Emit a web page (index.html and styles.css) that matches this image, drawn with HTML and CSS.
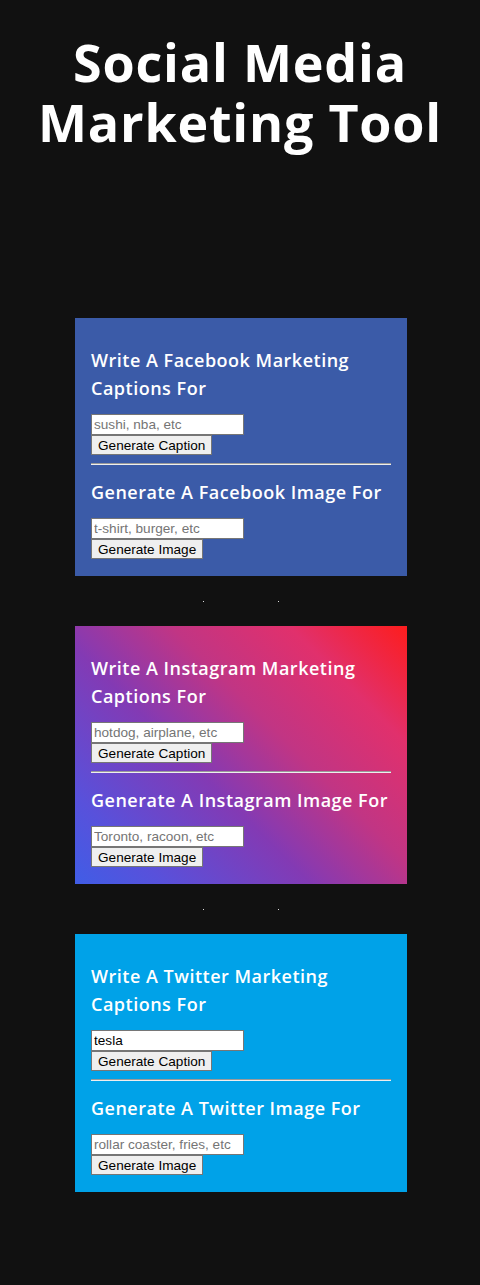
FILE: index.html
```html
<!DOCTYPE html>
<html>
<head>
<meta charset="utf-8">
<link rel="stylesheet" href="styles.css">
</head>
<body>
<h1 class="title">Social Media Marketing Tool</h1>
<main class="cards">
  <section class="card card-facebook">
    <h3 class="card-heading">Write A Facebook Marketing Captions For</h3>
    <div class="field">
      <input class="text-input" type="text" placeholder="sushi, nba, etc">
      <button class="btn">Generate Caption</button>
    </div>
    <hr class="divider">
    <h3 class="card-heading">Generate A Facebook Image For</h3>
    <div class="field">
      <input class="text-input" type="text" placeholder="t-shirt, burger, etc">
      <button class="btn">Generate Image</button>
    </div>
  </section>
  <div class="dots"><span class="dot"></span><span class="dot"></span></div>
  <section class="card card-instagram">
    <h3 class="card-heading">Write A Instagram Marketing Captions For</h3>
    <div class="field">
      <input class="text-input" type="text" placeholder="hotdog, airplane, etc">
      <button class="btn">Generate Caption</button>
    </div>
    <hr class="divider">
    <h3 class="card-heading">Generate A Instagram Image For</h3>
    <div class="field">
      <input class="text-input" type="text" placeholder="Toronto, racoon, etc">
      <button class="btn">Generate Image</button>
    </div>
  </section>
  <div class="dots"><span class="dot"></span><span class="dot"></span></div>
  <section class="card card-twitter">
    <h3 class="card-heading">Write A Twitter Marketing Captions For</h3>
    <div class="field">
      <input class="text-input" type="text" value="tesla">
      <button class="btn">Generate Caption</button>
    </div>
    <hr class="divider">
    <h3 class="card-heading">Generate A Twitter Image For</h3>
    <div class="field">
      <input class="text-input" type="text" placeholder="rollar coaster, fries, etc">
      <button class="btn">Generate Image</button>
    </div>
  </section>
</main>
</body>
</html>
```

FILE: styles.css
```css
html, body {
  margin: 0;
  padding: 0;
  background: #111111;
}
body {
  font-family: "Open Sans", "Liberation Sans", sans-serif;
  color: #ffffff;
  min-height: 1285px;
}
.title {
  margin: 0;
  padding-top: 32px;
  font-size: 52px;
  line-height: 60px;
  font-weight: 700;
  text-align: center;
  letter-spacing: 0.8px;
}
.cards {
  display: flex;
  flex-direction: column;
  align-items: center;
  margin-top: 166px;
  padding-left: 2px;
}
.card {
  width: 332px;
  box-sizing: border-box;
  padding: 28px 16px 17px;
}
.card-facebook { background: #3b5ba8; }
.card-instagram {
  background: linear-gradient(45deg, #405de6 0%, #5851db 15%, #833ab4 40%, #c13584 60%, #e1306c 80%, #fd1d1d 100%);
}
.card-twitter { background: #00a2e8; }
.card-heading {
  margin: 0;
  font-size: 18px;
  line-height: 28px;
  font-weight: 600;
  letter-spacing: 0.5px;
}
.field {
  display: flex;
  flex-direction: column;
  align-items: flex-start;
  margin-top: 12px;
}
.text-input {
  font-family: "Liberation Sans", Arial, sans-serif;
  font-size: 13.6px;
  width: 153px;
  height: 21px;
  box-sizing: border-box;
  border: 1px solid #767676;
  padding: 1px 2px;
  background: #fff;
  color: #000;
  margin: 0;
}
.text-input::placeholder { color: #757575; }
.btn {
  font-family: "Liberation Sans", Arial, sans-serif;
  font-size: 13.6px;
  height: 20px;
  box-sizing: border-box;
  padding: 1px 6px;
  border: 1px solid #767676;
  background: #efefef;
  color: #000;
  margin: 0;
}
.divider {
  margin: 8px 0 13px;
  border: 0;
  border-top: 1px solid #9a9a9a;
  border-bottom: 1px solid #eeeeee;
  height: 0;
}
.dots {
  display: flex;
  justify-content: center;
  gap: 74px;
  height: 50px;
  align-items: center;
}
.dot {
  width: 1px;
  height: 1px;
  background: #dddddd;
}
```
